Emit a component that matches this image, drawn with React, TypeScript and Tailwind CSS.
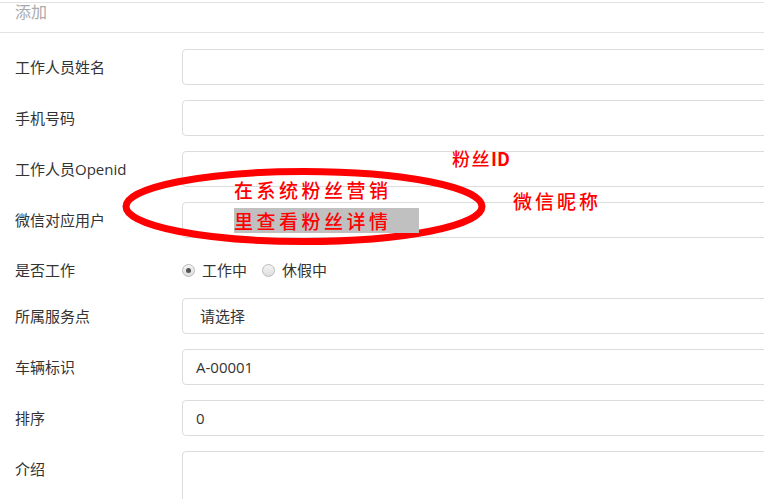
import React from "react";

const fields = [
  { label: "工作人员姓名", value: "" },
  { label: "手机号码", value: "" },
  { label: "工作人员Openid", value: "" },
  { label: "微信对应用户", value: "" },
];

const lower = [
  { label: "所属服务点", value: "请选择", select: true },
  { label: "车辆标识", value: "A-00001" },
  { label: "排序", value: "0" },
];

function Row({ label, value, select }: { label: string; value: string; select?: boolean }) {
  return (
    <div className="flex items-center h-[36px] mb-[15px]">
      <div className="w-[182px] shrink-0 pl-[15px] text-[15px] text-[#333]">{label}</div>
      <div
        className={`w-[620px] shrink-0 h-[36px] border border-[#dcdcdc] rounded-[4px] flex items-center text-[15px] text-[#333] ${
          select ? "pl-[17px]" : "pl-[13px]"
        }`}
      >
        {value}
      </div>
    </div>
  );
}

function Radio({ checked, label }: { checked?: boolean; label: string }) {
  return (
    <label className="flex items-center gap-[7px] mr-[15px]">
      <span className="w-[13px] h-[13px] rounded-full border border-[#bbb] bg-gradient-to-b from-[#f4f4f4] to-[#dedede] flex items-center justify-center">
        {checked && <span className="w-[5px] h-[5px] rounded-full bg-[#555]" />}
      </span>
      <span className="text-[15px] text-[#333]">{label}</span>
    </label>
  );
}

export default function App() {
  return (
    <div
      className="relative w-[764px] h-[499px] overflow-hidden bg-white"
      style={{ fontFamily: '"Open Sans", "Noto Sans CJK SC", sans-serif' }}
    >
      <div className="mt-[2px] border-t border-b border-[#e2e2e2] h-[31px] flex items-start pl-[15px]">
        <span className="text-[16px] leading-[18px] text-[#aaa]">添加</span>
      </div>

      <div className="pt-[16px]">
        {fields.map((f) => (
          <Row key={f.label} label={f.label} value={f.value} />
        ))}

        <div className="flex items-center h-[30px] mb-[15px] pt-[4px]">
          <div className="w-[182px] shrink-0 pl-[15px] text-[15px] text-[#333]">是否工作</div>
          <Radio checked label="工作中" />
          <Radio label="休假中" />
        </div>

        {lower.map((f) => (
          <Row key={f.label} label={f.label} value={f.value} select={f.select} />
        ))}

        <div className="flex items-start">
          <div className="w-[182px] shrink-0 pl-[15px] pt-[7px] text-[15px] text-[#333]">介绍</div>
          <div className="w-[620px] shrink-0 h-[80px] border border-[#dcdcdc] rounded-[4px]" />
        </div>
      </div>

      {/* hand-drawn annotation */}
      <svg className="absolute left-0 top-0 pointer-events-none" width="764" height="499">
        <ellipse cx="304" cy="206.5" rx="178" ry="35" fill="none" stroke="#ff0000" strokeWidth="7" />
      </svg>
      <div
        className="absolute left-[234px] top-[179px] text-[19px] leading-[22px] font-medium tracking-[3.5px] text-[#ff0000]"
        style={{ fontFamily: '"Noto Sans CJK SC", sans-serif' }}
      >
        在系统粉丝营销
      </div>
      <div
        className="absolute left-[234px] top-[208px] w-[185px] h-[25px] bg-[#c0c0c0] text-[19px] leading-[25px] font-medium tracking-[3.5px] text-[#ff0000]"
        style={{ fontFamily: '"Noto Sans CJK SC", sans-serif' }}
      >
        里查看粉丝详情
      </div>
      <div
        className="absolute left-[452px] top-[147px] text-[18px] leading-[22px] font-medium tracking-[1.5px] text-[#ff0000]"
        style={{ fontFamily: '"Noto Sans CJK SC", sans-serif' }}
      >
        粉丝<span className="font-bold tracking-normal">ID</span>
      </div>
      <div
        className="absolute left-[513px] top-[190px] text-[19px] leading-[22px] font-medium tracking-[3px] text-[#ff0000]"
        style={{ fontFamily: '"Noto Sans CJK SC", sans-serif' }}
      >
        微信昵称
      </div>
    </div>
  );
}
